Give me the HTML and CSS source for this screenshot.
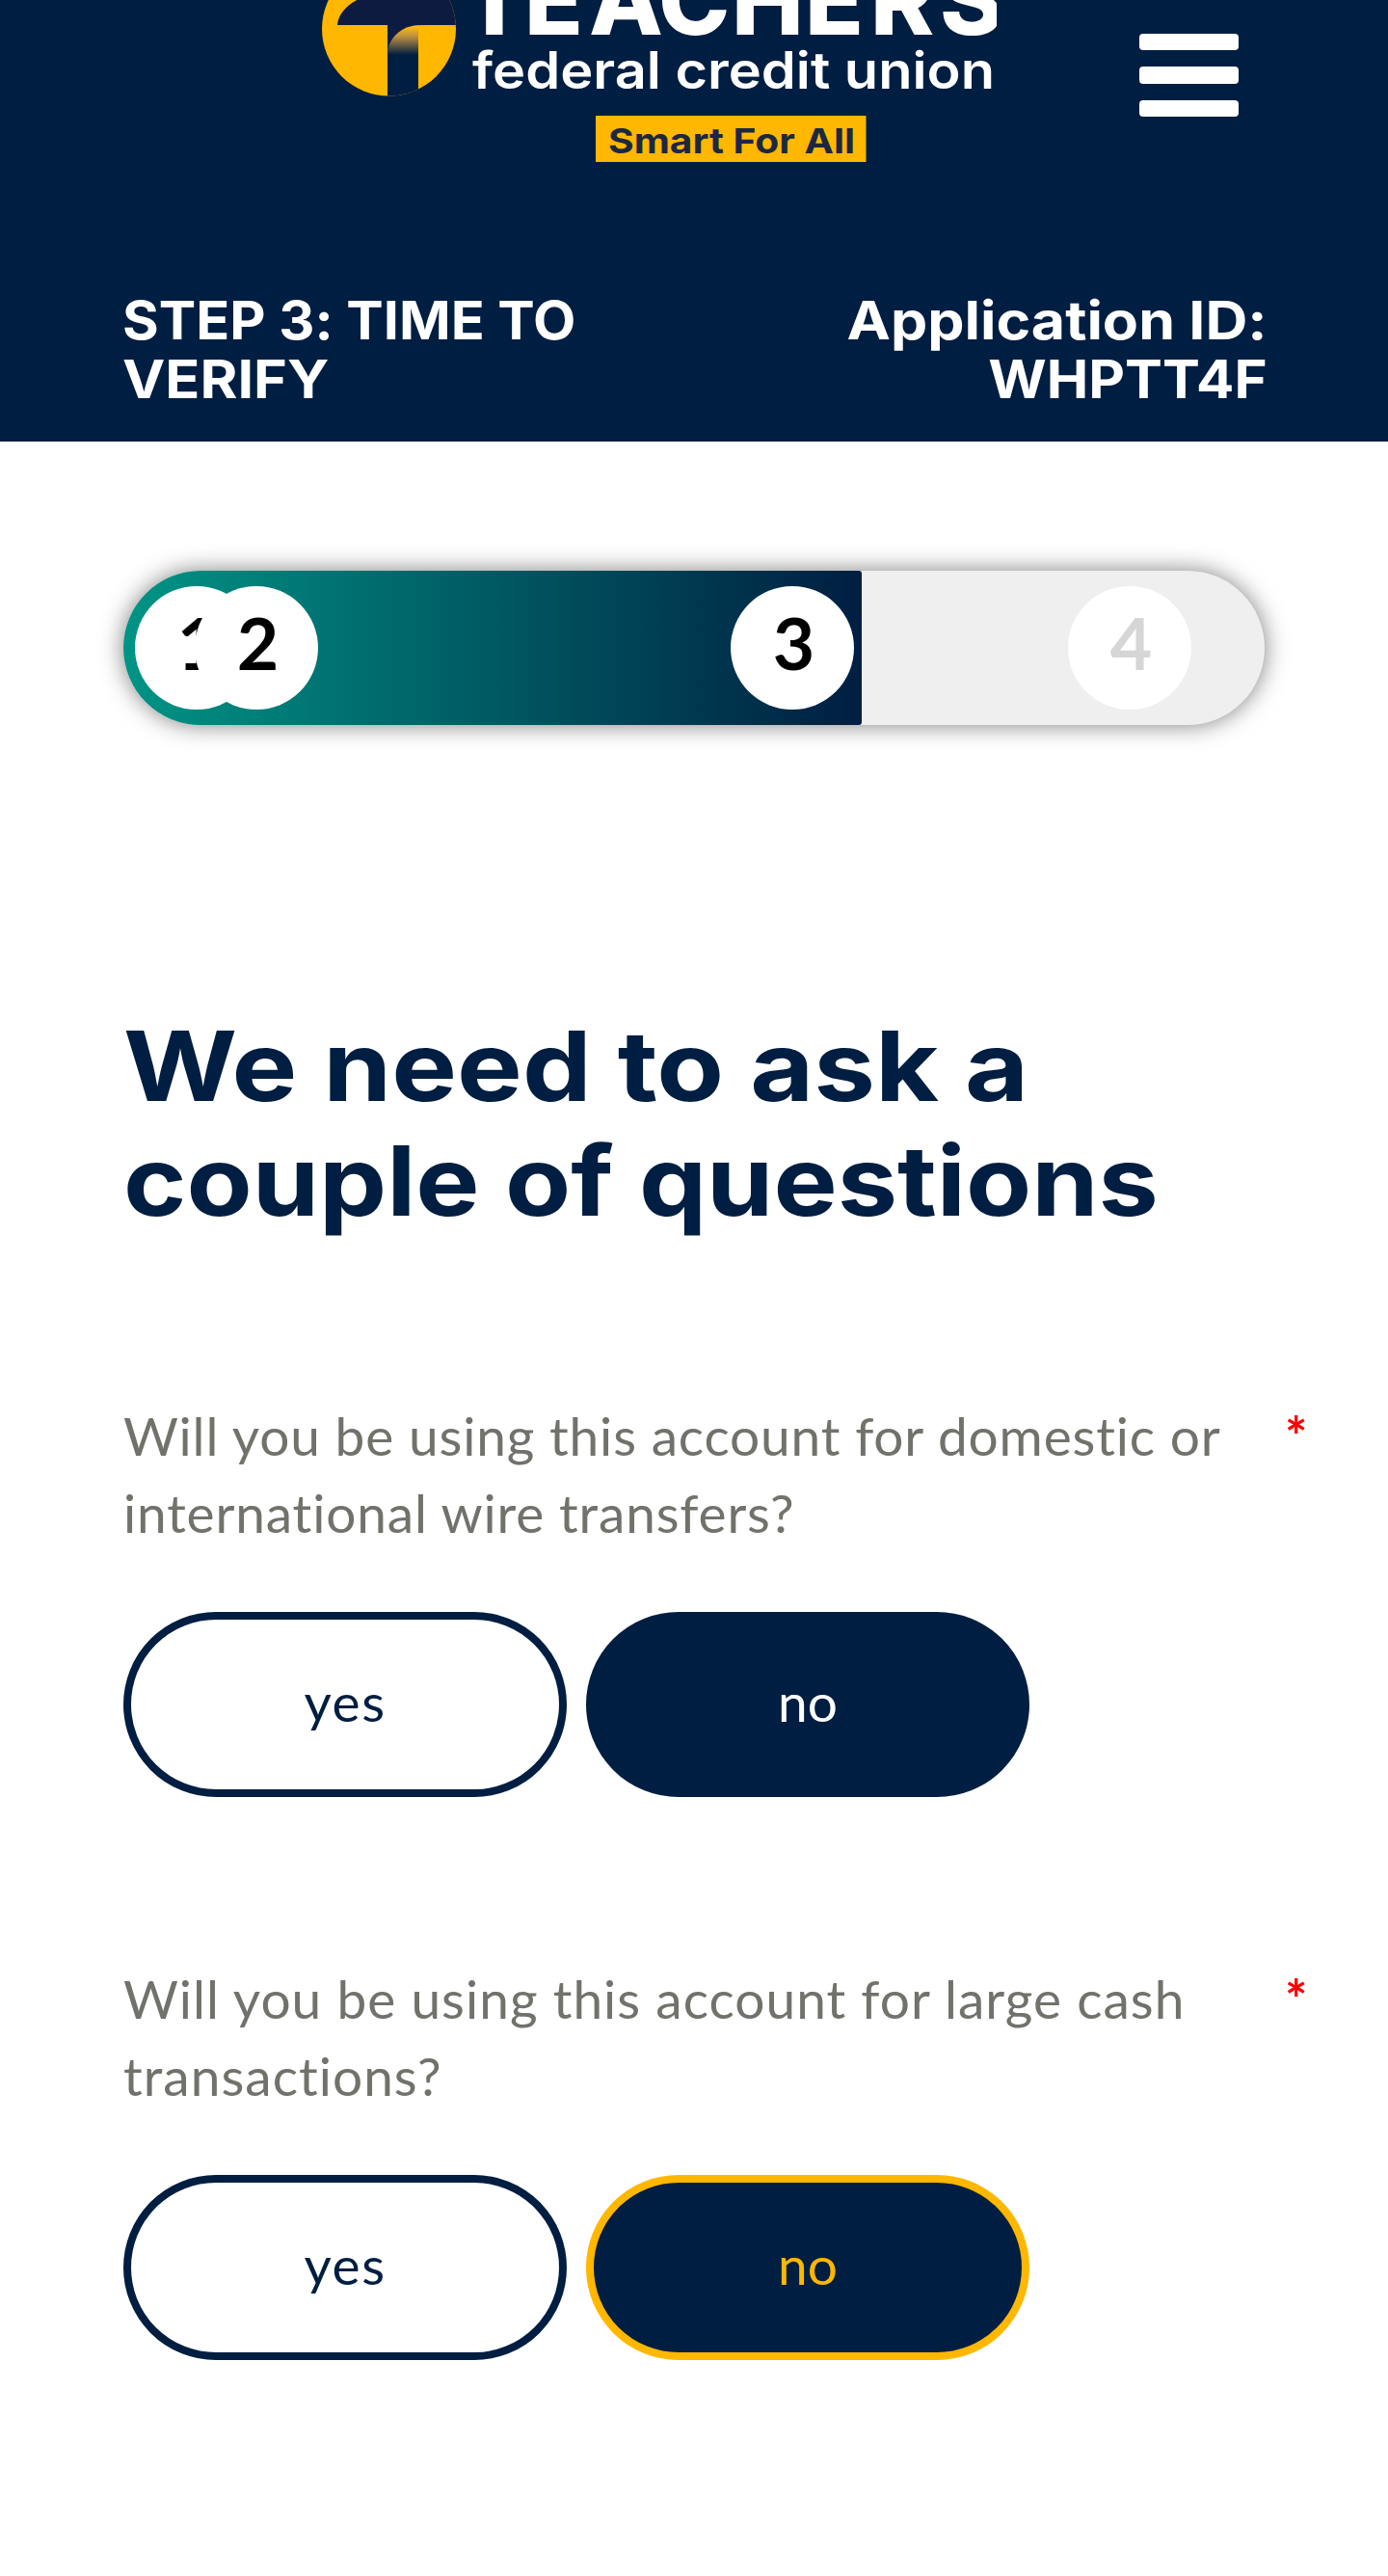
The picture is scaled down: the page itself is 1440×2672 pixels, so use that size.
FILE: index.html
```html
<!DOCTYPE html>
<html lang="en">
<head>
<meta charset="utf-8">
<title>Teachers Federal Credit Union – Verify</title>
<link rel="stylesheet" href="styles.css">
</head>
<body>
<header class="header">
  <div class="brand-bar">
    <svg class="logo" viewBox="334 0 700 168" role="img" aria-label="Teachers Federal Credit Union">
      <defs>
        <linearGradient id="fade" x1="0" y1="28" x2="0" y2="57" gradientUnits="userSpaceOnUse">
          <stop offset="0" stop-color="#fdb913"/><stop offset=".35" stop-color="#b98d43"/><stop offset="1" stop-color="#001e41"/>
        </linearGradient>
        <clipPath id="disc"><circle cx="403.500" cy="30" r="69.500"/></clipPath>
      </defs>
      <g clip-path="url(#disc)">
        <rect x="334" y="-40" width="140" height="140" fill="#ffb700"/>
        <path d="M350 26C351 14 360 5 374-2V-40H480V26Z" fill="#0e1b40"/>
        <rect x="402" y="25" width="32" height="76" fill="#001e41"/>
        <path d="M402 26H437C420 27 406 36 402 52Z" fill="#0e1b40"/>
        <path d="M402 57V52C406 36 418 27 434 26V57Z" fill="url(#fade)"/>
      </g>
      <text class="logo-name" y="36" x="479 544 611 683 759 835 903 975">TEACHERS</text>
      <text class="logo-sub" x="490" y="92" textLength="542" lengthAdjust="spacingAndGlyphs">federal credit union</text>
      <rect x="618" y="120" width="280.500" height="48" fill="#ffb700"/>
      <text class="logo-tag" x="631" y="158.500" textLength="256" lengthAdjust="spacingAndGlyphs">Smart For All</text>
    </svg>
    <button class="menu" aria-label="Menu"><span></span><span></span><span></span></button>
  </div>
  <div class="status">
    <div><span class="line s1">STEP 3: TIME TO</span><span class="line s2">VERIFY</span></div>
    <div class="app-id"><span class="line s3">Application ID:</span><span class="line s4">WHPTT4F</span></div>
  </div>
</header>
<main class="main">
  <div class="progress">
    <div class="fill">
      <span class="step">1</span><span class="step step-2">2</span><span class="step step-3">3</span>
    </div>
    <span class="step step-off">4</span>
  </div>
  <h1 class="title"><span class="line t1">We need to ask a</span><span class="line t2">couple of questions</span></h1>
  <section class="question">
    <div class="prompt"><p class="label"><span class="line q1">Will you be using this account for domestic or</span><span class="line q2">international wire transfers?</span></p><span class="required">*</span></div>
    <div class="answers"><button class="answer yes">yes</button><button class="answer selected">no</button></div>
  </section>
  <section class="question">
    <div class="prompt"><p class="label"><span class="line q3">Will you be using this account for large cash</span><span class="line q4">transactions?</span></p><span class="required">*</span></div>
    <div class="answers"><button class="answer yes">yes</button><button class="answer selected focused">no</button></div>
  </section>
</main>
</body>
</html>
```
FILE: styles.css
```css
* { box-sizing: border-box; }
body { margin: 0; background: #fff; font-family: Lato, sans-serif; font-variant-ligatures: none; }
.header { height: 458px; background: #001e41; color: #fff; font-family: Inter, sans-serif; }
.brand-bar { display: flex; justify-content: space-between; align-items: flex-start; height: 302px; padding: 0 155px 0 334px; }
.logo { width: 700px; height: 168px; display: block; }
.logo text { font-family: Inter, sans-serif; fill: #fff; }
.logo .logo-name { font-size: 100px; font-weight: 800; }
.logo .logo-sub { font-size: 53px; font-weight: 600; }
.logo .logo-tag { font-size: 36px; font-weight: 700; fill: #1b2840; }
.menu { display: flex; flex-direction: column; gap: 17px; width: 103px; margin-top: 35px; padding: 0; border: 0; background: none; }
.menu span { display: block; height: 17.3px; width: 103px; border-radius: 4px; background: #fff; }
.line { display: block; white-space: nowrap; transform-origin: 0 0; }
.status { display: flex; justify-content: space-between; padding: 0 125px 0 127px; font-size: 55px; line-height: 61px; font-weight: 700; }
.app-id { text-align: right; }
.app-id .line { transform-origin: 100% 0; }
.s1 { transform: scaleX(1.048); }
.s2 { transform: scaleX(1.08); }
.s3 { transform: scaleX(1.105); }
.s4 { transform: scaleX(1.06); }
.main { padding: 134px 128px 0; }
.progress { display: flex; align-items: center; height: 160px; border-radius: 80px; background: #efefef; box-shadow: 0 0 24px rgba(0, 0, 0, .5); }
.fill { display: flex; align-items: center; width: 766px; height: 160px; padding-left: 12px; border-radius: 80px 3px 3px 80px; background: linear-gradient(90deg, #009485, #001e41); }
.step { display: flex; align-items: center; justify-content: center; flex: none; width: 128px; height: 128px; padding: 0 0 12px 3px; border-radius: 50%; background: #fff; color: #000; font-size: 75px; line-height: 90px; font-weight: 700; }
.step-2 { margin-left: -66px; }
.step-3 { margin-left: 428px; }
.step-off { margin-left: 214px; color: #d6d6d6; }
.title { margin: 294px 0 0; color: #001e41; font: 700 100px/119px Inter, sans-serif; }
.t1 { transform: scaleX(1.139); }
.t2 { transform: scaleX(1.113); }
.question { margin-top: 165px; }
.question + .question { margin-top: 169px; }
.prompt { display: flex; color: #70726b; font-size: 55px; line-height: 80px; }
.label { flex: none; width: 1184px; margin: 0; }
.q1, .q2 { letter-spacing: .83px; }
.q3, .q4 { letter-spacing: 1.03px; }
.required { margin-left: 21px; color: #f00; font-weight: 700; }
.answers { display: flex; gap: 20px; margin-top: 63px; }
.answer { width: 460px; height: 192px; padding: 0 0 6px; border: 8px solid #001e41; border-radius: 96px; background: #fff; color: #001e41; font: 400 55px/80px Lato, sans-serif; }
.yes { letter-spacing: 1.5px; }
.selected { background: #001e41; color: #fff; }
.focused { border-color: #ffb700; color: #ffb700; }
```
